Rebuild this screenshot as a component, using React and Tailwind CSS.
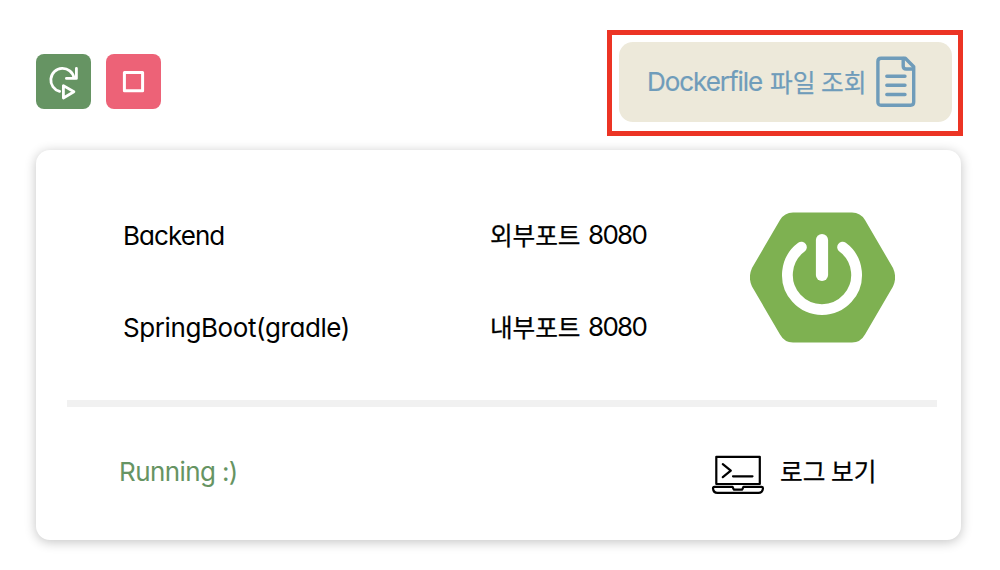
import React from "react";

const LATIN = "font-['Inter',sans-serif] [font-feature-settings:'cv11'] whitespace-pre";
const HANGUL = "font-['Noto_Sans_CJK_KR',sans-serif] [-webkit-text-stroke:0.25px_currentColor] whitespace-pre";

function RestartIcon() {
  return (
    <svg width="55" height="55" viewBox="0 0 55 55" fill="none" stroke="#fff" strokeWidth="2.8" strokeLinecap="round" strokeLinejoin="round">
      <path d="M23.6 37.4A11.7 11.7 0 1 1 38 23.8" />
      <path d="M40.4 14.5V24.4H30.4" />
      <path d="M27.4 31.6V44L37.9 37.8Z" />
    </svg>
  );
}

function StopIcon() {
  return (
    <svg width="55" height="55" viewBox="0 0 55 55" fill="none" stroke="#fff" strokeWidth="3" strokeLinejoin="round">
      <path d="M18.4 18.6H36.6V36.8H18.4Z" />
    </svg>
  );
}

function DocumentIcon() {
  return (
    <svg className="shrink-0" width="40" height="52" viewBox="0 0 40 52" fill="none" stroke="#6f9cba" strokeWidth="3.4" strokeLinecap="round" strokeLinejoin="round">
      <path d="M5 2.2H29.3L37.7 10.8V46Q37.7 49.2 34.5 49.2H5Q1.9 49.2 1.9 46V5.4Q1.9 2.2 5 2.2Z" />
      <path d="M27.2 2.5V10Q27.2 13 30.2 13H37.4" />
      <path d="M10.8 20.3H29M10.8 29.3H29M10.8 38.5H29" />
    </svg>
  );
}

function SpringBootLogo() {
  return (
    <svg className="shrink-0" width="145" height="131" viewBox="0 0 145 131" fill="none">
      <path fill="#7eb151" d="M43 .5H102Q110.5 .5 115 8L143 56Q147.2 65.500 143 74.500L115 122.500Q110.500 130.500 102 130.500H43Q34.500 130.500 30 122.500L2 74.500Q-2.200 65.500 2 56L30 8Q34.500 .5 43 .5Z" />
      <path stroke="#fff" strokeWidth="10.8" strokeLinecap="round" d="M51.4 35.2A34.600 34.600 0 1 0 92.600 35.200" />
      <path stroke="#fff" strokeWidth="12.2" strokeLinecap="round" d="M72 28V63" />
    </svg>
  );
}

function TerminalIcon() {
  return (
    <svg className="shrink-0" width="54" height="40" viewBox="0 0 54 40" fill="none" stroke="#000" strokeWidth="2.2" strokeLinejoin="round">
      <path d="M5.3 29V1.800H48.800V29Z" />
      <path strokeLinecap="round" d="M11.800 9.200L19.800 15.700L11.800 22.200M22 21.300H41.500" />
      <path d="M3.500 31.800H21.500L22.800 34.600H31.200L32.500 31.800H50.500Q52 31.800 52 33.400Q51.500 37.900 47.500 37.900H6.500Q2.300 37.900 2 33.400Q2 31.800 3.500 31.800Z" />
    </svg>
  );
}

function Port({ label }) {
  return (
    <div className="flex h-10 items-center text-black">
      <span className={`${HANGUL} mb-[3px] w-[98px] text-[24.7px] leading-10 tracking-[-0.1px]`}>{label}</span>
      <span className={`${LATIN} text-[26px] leading-10 tracking-[-1.7px]`}>8080</span>
    </div>
  );
}

export default function App() {
  return (
    <main className="h-[570px] w-[1000px] overflow-hidden bg-white pt-[30px] pl-9">
      <header className="flex h-[120px] items-start">
        <button className="mt-6 h-[55px] w-[55px] rounded-lg bg-[#669463]" aria-label="Restart">
          <RestartIcon />
        </button>
        <button className="mt-6 ml-[15px] h-[55px] w-[55px] rounded-lg bg-[#ed6277]" aria-label="Stop">
          <StopIcon />
        </button>
        <div className="ml-[446px] h-[106px] w-[356px] border-5 border-[#ec3424] pt-[7px] pl-[7px]">
          <button className="flex h-20 w-[333px] items-center rounded-[14px] bg-[#ede9da] pl-[28px] text-[#6f9cba]">
            <span className={`${LATIN} w-[123px] text-left text-[26px] leading-10 tracking-[-1.05px] [-webkit-text-stroke:0.2px_currentColor]`}>Dockerfile</span>
            <span className={`${HANGUL} mr-[9px] mb-[3px] w-[97px] text-left text-[24.7px] leading-10`}>파일 조회</span>
            <DocumentIcon />
          </button>
        </div>
      </header>
      <section className="h-[390px] w-[925px] rounded-[14px] bg-white px-[31px] shadow-[0_2px_12px_rgba(0,0,0,0.24)]">
        <div className="flex h-[250px] items-start">
          <div className="w-[423px] pt-[66px] pl-[56px] text-black">
            <div className={`${LATIN} h-10 text-[26px] leading-10 tracking-[-0.95px]`}>Backend</div>
            <div className={`${LATIN} mt-[52px] h-10 text-[26px] leading-10 tracking-[-0.4px]`}>SpringBoot(gradle)</div>
          </div>
          <div className="w-[260px] pt-[65px]">
            <Port label="외부포트" />
            <div className="h-[52px]" />
            <Port label="내부포트" />
          </div>
          <div className="pt-[62px]">
            <SpringBootLogo />
          </div>
        </div>
        <hr className="h-[7px] w-[870px] border-0 bg-[#f1f1f1]" />
        <div className="flex items-start">
          <div className={`${LATIN} mt-[45px] w-[644px] pl-[52px] text-[26px] leading-10 tracking-[-0.6px] text-[#669463]`}>Running :)</div>
          <button className="mt-[45px] flex h-[45px] items-center text-black">
            <TerminalIcon />
            <span className={`${HANGUL} mb-[9px] ml-[15px] text-[24.7px] leading-10`}>로그 보기</span>
          </button>
        </div>
      </section>
    </main>
  );
}
